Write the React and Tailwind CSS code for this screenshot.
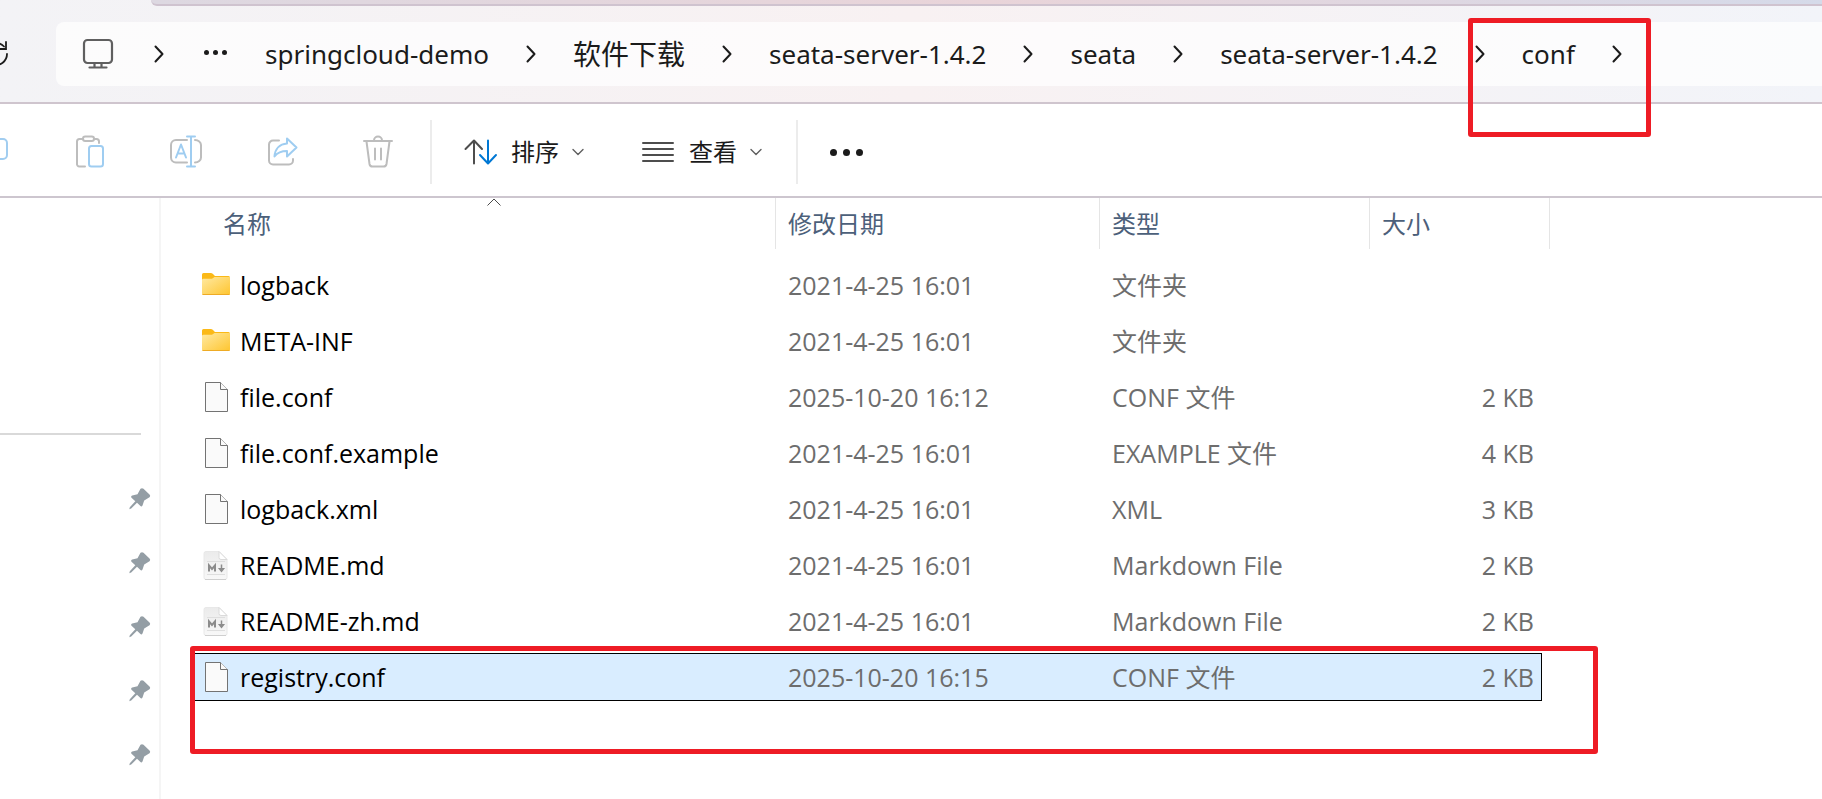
import { Fragment } from 'react'

const CRUMBS = ['springcloud-demo', '软件下载', 'seata-server-1.4.2', 'seata', 'seata-server-1.4.2', 'conf']

const FILES = [
  { name: 'logback', date: '2021-4-25 16:01', type: '文件夹', size: '', icon: 'folder' },
  { name: 'META-INF', date: '2021-4-25 16:01', type: '文件夹', size: '', icon: 'folder' },
  { name: 'file.conf', date: '2025-10-20 16:12', type: 'CONF 文件', size: '2 KB', icon: 'file' },
  { name: 'file.conf.example', date: '2021-4-25 16:01', type: 'EXAMPLE 文件', size: '4 KB', icon: 'file' },
  { name: 'logback.xml', date: '2021-4-25 16:01', type: 'XML', size: '3 KB', icon: 'file' },
  { name: 'README.md', date: '2021-4-25 16:01', type: 'Markdown File', size: '2 KB', icon: 'markdown' },
  { name: 'README-zh.md', date: '2021-4-25 16:01', type: 'Markdown File', size: '2 KB', icon: 'markdown' },
  { name: 'registry.conf', date: '2025-10-20 16:15', type: 'CONF 文件', size: '2 KB', icon: 'file', selected: true },
]

const PINNED = ['1', '2', '3', '4', '5']

function Chevron() {
  return (
    <svg width="10" height="18" viewBox="0 0 10 18" fill="none" stroke="#1b1b1b" strokeWidth="2" strokeLinecap="round" strokeLinejoin="round">
      <path d="M1.5 1.5 8.5 9l-7 7.5" />
    </svg>
  )
}

function ChevronDown() {
  return (
    <svg width="12" height="8" viewBox="0 0 12 8" fill="none" stroke="#5f5f5f" strokeWidth="1.4" strokeLinecap="round" strokeLinejoin="round">
      <path d="m1 1.5 5 5 5-5" />
    </svg>
  )
}

function RefreshIcon() {
  return (
    <svg width="24" height="28" viewBox="0 0 24 28" fill="none" stroke="#1b1b1b" strokeWidth="1.8" strokeLinecap="round">
      <path d="M23 14A11 11 0 1 1 20 6.500" />
      <path d="M22 2v7h-7" />
    </svg>
  )
}

function MonitorIcon() {
  return (
    <svg width="32" height="32" viewBox="0 0 32 32" fill="none" stroke="#5f5f5f" strokeWidth="2.2" strokeLinecap="round">
      <rect x="2" y="2" width="28" height="23" rx="3.500" />
      <path d="M12.500 25v4M19.500 25v4M7.500 29.500h17" />
    </svg>
  )
}

function CopyIcon() {
  return (
    <svg width="24" height="32" viewBox="0 0 24 32" fill="none" stroke="#a1cdf0" strokeWidth="2">
      <rect x="3" y="3" width="20" height="20" rx="4" />
    </svg>
  )
}

function PasteIcon() {
  return (
    <svg width="32" height="34" viewBox="0 0 32 34" fill="none" stroke="#bdbdbd" strokeWidth="2" strokeLinecap="round">
      <path d="M8 4H4.500A2.500 2.500 0 0 0 2 6.500v22A2.500 2.500 0 0 0 4.500 31.500H10M19 4h2.500A2.500 2.500 0 0 1 24 6.500V8" />
      <rect x="8" y="1.500" width="11" height="4.500" rx="2.200" />
      <rect x="14" y="11" width="14" height="20.500" rx="2.500" stroke="#9fcdf1" />
    </svg>
  )
}

function RenameIcon() {
  return (
    <svg width="34" height="34" viewBox="0 0 34 34" fill="none" stroke="#bdbdbd" strokeWidth="2" strokeLinecap="round">
      <path d="M18 5H7a5 5 0 0 0-5 5v12.500a5 5 0 0 0 5 5h11M26 5a6 5 0 0 1 6 5v12.500a6 5 0 0 1-6 5" />
      <g stroke="#9fcdf1" strokeLinejoin="round">
        <path d="m7 22.500 5-13 5 13M8.500 18.500h7" />
        <path d="M18 1.500h8M18 31.500h8M22 1.500v30" />
      </g>
    </svg>
  )
}

function ShareIcon() {
  return (
    <svg width="32" height="32" viewBox="0 0 32 32" fill="none" stroke="#bdbdbd" strokeWidth="2" strokeLinecap="round" strokeLinejoin="round">
      <path d="M12 4.500H6A4 4 0 0 0 2 8.500v16a4 4 0 0 0 4 4h16a4 4 0 0 0 4-4V23" />
      <path d="M20 2.500 29.500 11.500 20 20.500v-5.500c-6 0-9.500 1.500-12.500 5.500C8 13 12.500 8 20 7.500z" stroke="#9fcdf1" />
    </svg>
  )
}

function TrashIcon() {
  return (
    <svg width="32" height="34" viewBox="0 0 32 34" fill="none" stroke="#bdbdbd" strokeWidth="2" strokeLinecap="round">
      <path d="M2 6h28M12 5.500a4 4 0 0 1 8 0M4.500 6.500l3 22.500a3 3 0 0 0 3 2.500h11a3 3 0 0 0 3-2.500l3-22.500M13 13.500v11M19 13.500v11" />
    </svg>
  )
}

function SortIcon() {
  return (
    <svg width="34" height="26" viewBox="0 0 34 26" fill="none" strokeWidth="2" strokeLinecap="round" strokeLinejoin="round">
      <path d="M10 24.500V2M1.500 10 10 1.500l8 8.500" stroke="#4d4d4d" />
      <path d="M24 1.500V24M16 16l8 8.500 8-8.500" stroke="#0078d4" />
    </svg>
  )
}

function ViewIcon() {
  return (
    <svg width="32" height="22" viewBox="0 0 32 22" stroke="#4d4d4d" strokeWidth="2" strokeLinecap="round">
      <path d="M1 2h30M1 8h30M1 14h30M1 20h30" />
    </svg>
  )
}

function Dots({ size, gap, color }) {
  const r = size / 2
  const width = size * 3 + gap * 2
  return (
    <svg width={width} height={size} viewBox={`0 0 ${width} ${size}`} fill={color}>
      {[0, 1, 2].map((i) => (
        <circle key={i} cx={r + i * (size + gap)} cy={r} r={r} />
      ))}
    </svg>
  )
}

function PinIcon() {
  return (
    <svg width="22" height="22" viewBox="0 0 22 22" fill="#949ea5">
      <path d="M11.500.8q1.500-1.300 3 0l6 5.700q1.300 1.300 0 2.700l-5.300 3.300-1.700 5q-1 1.700-2.300.3L8 14.800 2.200 20.600.3 21.200.8 19.300 6.300 13.300 2.500 9.800q-1-1.500.7-2.300l5.300-1.200z" />
    </svg>
  )
}

function FileIcon({ kind }) {
  if (kind === 'folder') {
    return (
      <svg width="28" height="32" viewBox="0 0 28 32">
        <defs>
          <linearGradient id="folder-front" x1="0" y1="0" x2="1" y2="1">
            <stop offset="0" stopColor="#ffe9a2" />
            <stop offset="1" stopColor="#fec52f" />
          </linearGradient>
        </defs>
        <path d="M0 5.500Q0 4 1.500 4H9q1.500 0 2.500 1.500L13 7h13.500Q28 7 28 8.500V13H0z" fill="#fbb917" />
        <path d="M0 11q0-1.300 1.500-1.300H10L12.500 8H28v16.500q0 1.500-1.500 1.500h-25Q0 26 0 24.500z" fill="url(#folder-front)" />
        <path d="M.5 25.500h27" stroke="#eeab25" />
      </svg>
    )
  }
  if (kind === 'markdown') {
    return (
      <svg width="28" height="32" viewBox="0 0 28 32">
        <defs>
          <linearGradient id="md-page" x1="0" y1="0" x2="0" y2="1">
            <stop offset="0" stopColor="#ebebeb" />
            <stop offset="1" stopColor="#f8f8f8" />
          </linearGradient>
        </defs>
        <path d="M4 2.500h13l8 8v18q0 2-2 2H4q-2 0-2-2v-24q0-2 2-2z" fill="url(#md-page)" stroke="#e8e8e8" />
        <path d="M3 30.500h21" stroke="#cfcfcf" />
        <path d="M17 2.500v6q0 2 2 2h6z" fill="#fff" stroke="#dadada" />
        <path d="M5 12.500h18M5 25.500h18" stroke="#dedede" />
        <path d="M7 22.500V16.500l3 3.500 3-3.500v6" fill="none" stroke="#8c8c8c" strokeWidth="2" />
        <path d="M19.500 15.500v6M17.500 19.800l2 2.500 2-2.500z" fill="#8c8c8c" stroke="#8c8c8c" strokeWidth="1.500" />
      </svg>
    )
  }
  return (
    <svg width="28" height="32" viewBox="0 0 28 32" fill="#fafafa" stroke="#737373">
      <path d="M3.500 1.500h15l7 7v22h-22z" />
      <path d="M18.500 1.500v7h7" />
    </svg>
  )
}

function Breadcrumbs() {
  return (
    <nav
      aria-label="路径"
      className="flex h-16 flex-1 items-center rounded-l-lg bg-white/70 pl-[26px] font-['Noto_Sans','Noto_Sans_CJK_SC',sans-serif] text-[26px] text-[#1b1b1b]"
    >
      <button aria-label="此电脑" className="mr-10">
        <MonitorIcon />
      </button>
      <Chevron />
      <button aria-label="更多" className="mr-[38px] ml-10 pb-1">
        <Dots size={5} gap={4} color="#1b1b1b" />
      </button>
      {CRUMBS.map((crumb, index) => (
        <Fragment key={index}>
          <button className={`mr-[37px] whitespace-nowrap ${crumb === '软件下载' ? 'text-[28px]' : ''}`}>{crumb}</button>
          <span className="mr-[37px]">
            <Chevron />
          </span>
        </Fragment>
      ))}
    </nav>
  )
}

function Toolbar() {
  return (
    <div className="flex h-[94px] items-center border-b-2 border-[#cdc6cf] pt-1 text-2xl text-[#1b1b1b]">
      <button aria-label="复制" className="-ml-4 w-6">
        <CopyIcon />
      </button>
      <button aria-label="粘贴" className="ml-[67px]">
        <PasteIcon />
      </button>
      <button aria-label="重命名" className="ml-[62px]">
        <RenameIcon />
      </button>
      <button aria-label="共享" className="ml-[64px]">
        <ShareIcon />
      </button>
      <button aria-label="删除" className="ml-[63px]">
        <TrashIcon />
      </button>
      <div className="ml-[36px] h-16 w-[2px] bg-[#ececec]" />
      <button className="ml-8 flex items-center gap-[13px]">
        <SortIcon />
        排序
        <ChevronDown />
      </button>
      <button className="ml-[58px] flex items-center gap-[13px]">
        <ViewIcon />
        <span className="ml-0.5">查看</span>
        <ChevronDown />
      </button>
      <div className="ml-[34px] h-16 w-[2px] bg-[#ececec]" />
      <button aria-label="查看更多" className="ml-8">
        <Dots size={7} gap={6} color="#1b1b1b" />
      </button>
    </div>
  )
}

function Sidebar() {
  return (
    <aside className="w-[161px] shrink-0 border-r-2 border-[#f5f5f5]">
      <div className="mt-[235px] mr-[18px] h-[2px] bg-[#d9d9d9]" />
      <ul className="mt-[32px] flex flex-col pr-2">
        {PINNED.map((id) => (
          <li key={id} className="flex h-16 items-center justify-end">
            <PinIcon />
          </li>
        ))}
      </ul>
    </aside>
  )
}

function FileTable() {
  return (
    <table className="w-[1349px] table-fixed border-separate border-spacing-y-2 text-left text-[25px] leading-8">
      <colgroup>
        <col className="w-[583px]" />
        <col className="w-[324px]" />
        <col className="w-[270px]" />
        <col className="w-[172px]" />
      </colgroup>
      <tbody>
        {FILES.map((file) => (
          <tr
            key={file.name}
            className={file.selected ? 'bg-[#d9edff] text-[#6d6d6d] outline outline-1 -outline-offset-1 outline-black' : 'text-[#6d6d6d]'}
          >
            <td className="h-12 p-0 pl-[9px] text-black">
              <div className="flex items-center gap-[10px]">
                <FileIcon kind={file.icon} />
                {file.name}
              </div>
            </td>
            <td className="p-0 pl-3">{file.date}</td>
            <td className="p-0 pl-3">{file.type}</td>
            <td className="p-0 pr-2 text-right">{file.size}</td>
          </tr>
        ))}
      </tbody>
    </table>
  )
}

function ColumnHeader() {
  return (
    <div className="flex h-[51px] text-2xl text-[#4c607a]">
      <button className="relative w-[615px] border-r border-[#e5e5e5] pl-[62px] text-left">
        名称
        <svg className="absolute top-0 left-[326px]" width="14" height="8" viewBox="0 0 14 8" fill="none" stroke="#4a4a4a">
          <path d="m.5 7.500 6.500-6.500 6.500 6.500" />
        </svg>
      </button>
      <button className="w-[324px] border-r border-[#e5e5e5] pl-3 text-left">修改日期</button>
      <button className="w-[270px] border-r border-[#e5e5e5] pl-3 text-left">类型</button>
      <button className="w-[180px] border-r border-[#e5e5e5] pl-3 text-left">大小</button>
    </div>
  )
}

export default function App() {
  return (
    <div className="relative flex min-h-screen flex-col overflow-hidden bg-white font-['Open_Sans','Noto_Sans_CJK_SC',sans-serif]">
      <header className="flex h-[104px] flex-col border-b-2 border-[#cfc5ce] bg-linear-to-r from-[#f3f3f6] via-[#f8f1f2] to-[#f2f4f9]">
        <div className="ml-[151px] h-[6px] rounded-bl-lg border-b-2 border-[#cfc3cf] bg-linear-to-r from-[#ddd8e1] via-[#e9d4d9] to-[#d5dae9]" />
        <div className="mt-4 flex items-center">
          <button aria-label="刷新" className="-ml-4 w-6">
            <RefreshIcon />
          </button>
          <div className="ml-12 flex flex-1">
            <Breadcrumbs />
          </div>
        </div>
      </header>
      <Toolbar />
      <div className="flex flex-1">
        <Sidebar />
        <main>
          <ColumnHeader />
          <div className="pt-1 pl-8">
            <FileTable />
          </div>
        </main>
      </div>

      {/* red markers over the last path segment and the selected file */}
      <div className="pointer-events-none absolute top-[18px] left-[1468px] h-[119px] w-[183px] rounded-[3px] border-[5px] border-[#ee1c25]" />
      <div className="pointer-events-none absolute top-[646px] left-[190px] h-[108px] w-[1408px] rounded-[3px] border-[5px] border-[#ee1c25]" />
    </div>
  )
}
